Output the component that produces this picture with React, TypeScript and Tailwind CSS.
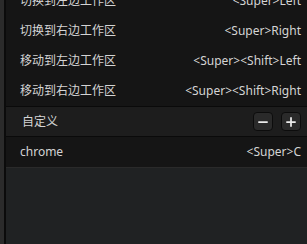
import { Minus, Plus } from "lucide-react";

const shortcuts = [
  { name: "切换到左边工作区", keys: "<Super>Left" },
  { name: "切换到右边工作区", keys: "<Super>Right" },
  { name: "移动到左边工作区", keys: "<Super><Shift>Left" },
  { name: "移动到右边工作区", keys: "<Super><Shift>Right" },
];

const custom = [{ name: "chrome", keys: "<Super>C" }];

function Row({ name, keys }: { name: string; keys: string }) {
  return (
    <div className="flex items-center justify-between h-[30px] pl-[14px] pr-[6px]">
      <span>{name}</span>
      <span>{keys}</span>
    </div>
  );
}

export default function App() {
  return (
    <div
      className="flex w-[307px] h-[244px] overflow-hidden bg-[#151515] text-[12px] text-[#d4d4d4]"
      style={{ fontFamily: '"Noto Sans", "Noto Sans CJK SC", sans-serif' }}
    >
      {/* window edge */}
      <div className="w-[4px] bg-[#2b2b2b]" />
      <div className="w-[2px] bg-[#0b0b0b]" />

      <div className="flex-1 flex flex-col min-w-0">
        <div className="-mt-[14px] bg-[#151515]">
          {shortcuts.map((s) => (
            <Row key={s.name} {...s} />
          ))}
        </div>

        {/* custom section header */}
        <div className="border-t border-[#0a0a0a] bg-[#1d1d1d] h-[30px] flex items-center justify-between pl-[16px] pr-[6px]">
          <span>自定义</span>
          <div className="flex gap-[8px]">
            <button className="w-[20px] h-[19px] rounded-[4px] border border-[#0c0c0c] bg-[#2a2a2a] flex items-center justify-center text-[#ececec]">
              <Minus size={14} strokeWidth={3} />
            </button>
            <button className="w-[20px] h-[19px] rounded-[4px] border border-[#0c0c0c] bg-[#2a2a2a] flex items-center justify-center text-[#ececec]">
              <Plus size={14} strokeWidth={3} />
            </button>
          </div>
        </div>

        <div className="border-t border-[#0a0a0a] bg-[#151515] h-[31px]">
          {custom.map((s) => (
            <Row key={s.name} {...s} />
          ))}
        </div>

        <div className="flex-1 border-t border-[#2a2a2a] bg-[#202223]" />
      </div>
    </div>
  );
}
